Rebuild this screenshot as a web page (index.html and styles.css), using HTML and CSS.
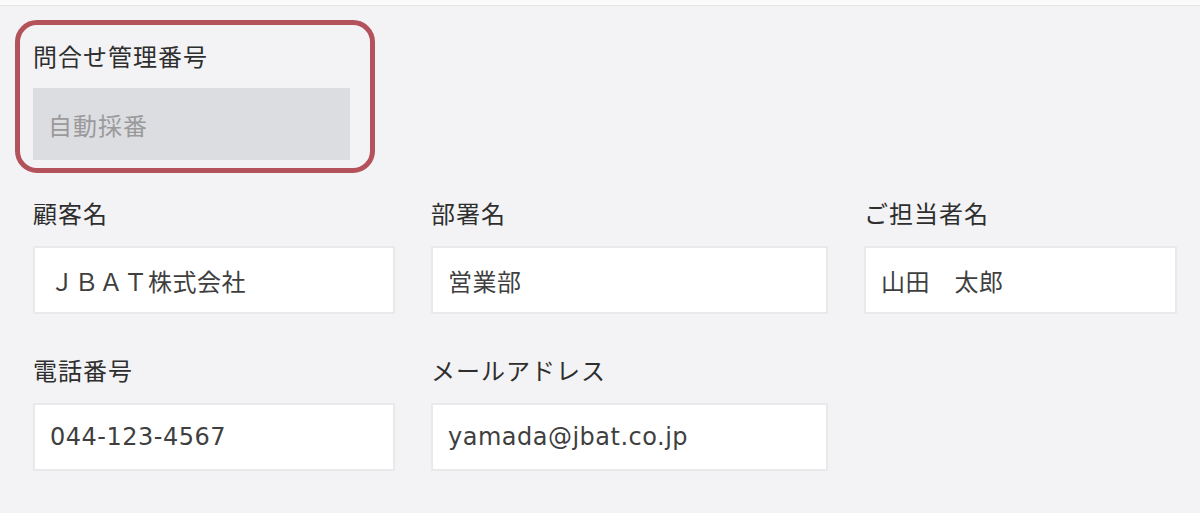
FILE: index.html
```html
<!DOCTYPE html>
<html lang="ja">
<head>
<meta charset="utf-8">
<title>問合せ登録</title>
<link rel="stylesheet" href="styles.css">
</head>
<body>
<div class="topbar"></div>
<form class="form">
  <div class="highlight">
    <label class="label">問合せ管理番号</label>
    <input class="input input-auto" type="text" placeholder="自動採番" disabled>
  </div>
  <div class="grid">
    <div class="field">
      <label class="label">顧客名</label>
      <input class="input" type="text" value="ＪＢＡＴ株式会社" readonly>
    </div>
    <div class="field">
      <label class="label">部署名</label>
      <input class="input" type="text" value="営業部" readonly>
    </div>
    <div class="field">
      <label class="label">ご担当者名</label>
      <input class="input" type="text" value="山田　太郎" readonly>
    </div>
    <div class="field">
      <label class="label">電話番号</label>
      <input class="input" type="text" value="044-123-4567" readonly>
    </div>
    <div class="field">
      <label class="label">メールアドレス</label>
      <input class="input" type="text" value="yamada@jbat.co.jp" readonly>
    </div>
  </div>
</form>
</body>
</html>
```

FILE: styles.css
```css
html, body {
  margin: 0;
  padding: 0;
}
body {
  background: #f3f3f5;
  font-family: "DejaVu Sans", "Noto Sans CJK JP", sans-serif;
  color: #333;
  width: 1200px;
  height: 513px;
  overflow: hidden;
}
.topbar {
  height: 5px;
  background: #fbfbfc;
  border-bottom: 1px solid #e6e6e9;
}
.form {
  display: flex;
  flex-direction: column;
}
.highlight {
  box-sizing: border-box;
  width: 360px;
  height: 153px;
  margin: 14px 0 0 15px;
  padding: 16px 20px 8px 13px;
  border: 5px solid #b3525a;
  border-radius: 22px;
  display: flex;
  flex-direction: column;
}
.label {
  display: block;
  font-family: "Noto Sans CJK JP", sans-serif;
  font-size: 24px;
  line-height: 30px;
  height: 30px;
  color: #2e2e2e;
  letter-spacing: 1px;
}
.highlight .label {
  margin-bottom: 17px;
}
.input {
  box-sizing: border-box;
  display: block;
  width: 100%;
  height: 68px;
  margin: 0;
  padding: 0 15px;
  font-family: "DejaVu Sans", "Noto Sans CJK JP", sans-serif;
  font-size: 24px;
  letter-spacing: 0.5px;
  color: #3f3f3f;
  background: #ffffff;
  border: 2px solid #e9e9ec;
  border-radius: 0;
  outline: none;
}
.input-auto {
  height: 72px;
  background: #dcdde0;
  border: none;
  font-family: "Noto Sans CJK JP", sans-serif;
  letter-spacing: 1px;
}
.input-auto::placeholder {
  color: #9a9a9c;
}
.grid {
  display: grid;
  grid-template-columns: 362px 397px 313px;
  column-gap: 36px;
  row-gap: 41px;
  padding: 25px 0 0 33px;
}
.field .label {
  margin-bottom: 18px;
}
```
